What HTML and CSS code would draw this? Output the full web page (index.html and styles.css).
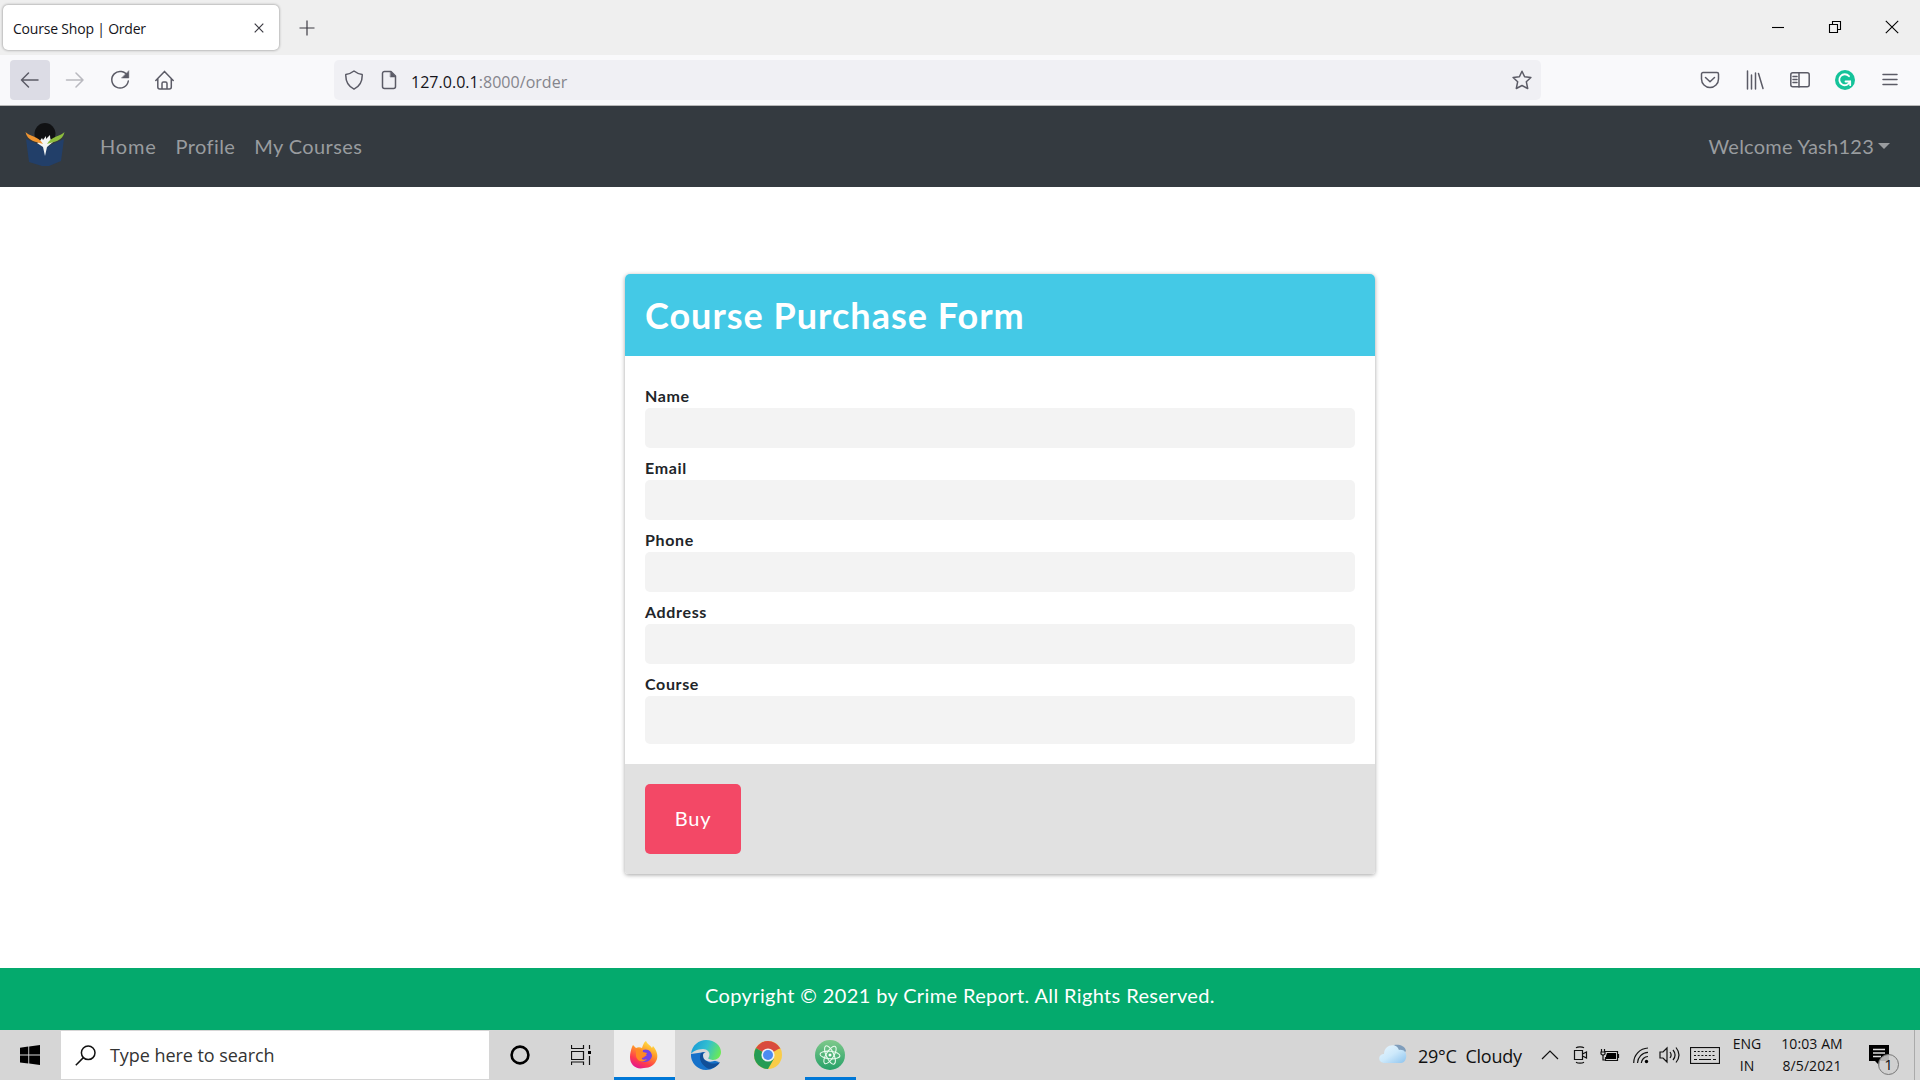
FILE: index.html
```html
<!DOCTYPE html>
<html lang="en">
<head>
<meta charset="utf-8">
<title>Course Shop | Order</title>
<link rel="stylesheet" href="styles.css">
</head>
<body>
<div class="tabs">
  <div class="tab"><span class="tab-title">Course Shop | Order</span>
    <svg class="tab-close" width="10" height="10" viewBox="0 0 10 10"><path d="M.7.7l8.6 8.6M9.300.7L.7 9.300"/></svg>
  </div>
  <svg class="new-tab" width="16" height="16" viewBox="0 0 16 16"><path d="M8 .5v15M.5 8h15"/></svg>
  <div class="window-controls">
    <svg width="14" height="14" viewBox="0 0 14 14"><path d="M1 7.500h12"/></svg>
    <svg width="14" height="14" viewBox="0 0 14 14"><path d="M1.500 4.500h8v8h-8zM4.500 4.500v-3h8v8h-3"/></svg>
    <svg width="14" height="14" viewBox="0 0 14 14"><path d="M.8.8l12.400 12.400M13.200.8L.8 13.200"/></svg>
  </div>
</div>
<div class="toolbar">
  <div class="tool active"><svg width="20" height="20" viewBox="0 0 20 20"><path d="M8.500 3l-7 7 7 7M1.500 10H18"/></svg></div>
  <div class="tool disabled"><svg width="20" height="20" viewBox="0 0 20 20"><path d="M11 3l7 7-7 7M18 10H1.500"/></svg></div>
  <div class="tool"><svg width="20" height="20" viewBox="0 0 20 20"><path d="M17.500 6A8.300 8.300 0 1 0 18.300 11"/><path class="solid" d="M18.800 1v7h-7z"/></svg></div>
  <div class="tool"><svg width="20" height="20" viewBox="0 0 20 20"><path d="M.8 10.500L9.500 1.400l8.700 9.100M2.800 8.500V17a2 2 0 0 0 2 2h9.500a2 2 0 0 0 2-2V8.500M7 19v-5.500a1.500 1.500 0 0 1 1.500-1.500h2a1.500 1.500 0 0 1 1.500 1.500V19"/></svg></div>
  <div class="address">
    <svg class="shield" width="20" height="20" viewBox="0 0 20 20"><path d="M10 1c2.500 2 5 3 8.200 3.500C18.500 11 15.500 16.500 10 19.200 4.500 16.500 1.500 11 1.800 4.500 5 4 7.500 3 10 1z"/></svg>
    <svg class="page-icon" width="16" height="20" viewBox="0 0 16 20"><path d="M10 1.500H3.500a2 2 0 0 0-2 2v13a2 2 0 0 0 2 2h9a2 2 0 0 0 2-2V6z"/><path class="solid" d="M9.500 1.500L14.500 7h-5z"/></svg>
    <span class="url">127.0.0.1<span class="url-path">:8000/order</span></span>
    <svg class="star" width="20" height="20" viewBox="0 0 20 20"><path d="M10 1.200l2.600 5.600 6.300.7-4.600 4.200 1.400 6.800-5.700-3-5.700 3 1.400-6.800L1.100 7.500l6.300-.7z"/></svg>
  </div>
  <div class="extensions">
    <svg width="20" height="20" viewBox="0 0 20 20"><path d="M3 2.500h14a1.500 1.500 0 0 1 1.500 1.500v5a8.500 8.500 0 0 1-17 0V4A1.500 1.500 0 0 1 3 2.500zM5.500 7.500L10 11.800l4.500-4.300"/></svg>
    <svg width="20" height="20" viewBox="0 0 20 20"><path d="M2.500 1v18M6.500 5v14M10.500 3v16M13.500 3.500l4.500 15"/></svg>
    <svg width="20" height="20" viewBox="0 0 20 20"><rect x=".8" y="2.800" width="18.400" height="14" rx="2"/><path d="M9 3v14M3 6.500h4M3 9.500h4M3 12.500h4"/></svg>
    <svg width="20" height="20" viewBox="0 0 20 20"><circle class="grammarly" cx="10" cy="10" r="10"/><path class="grammarly-g" d="M14 6.200a5.500 5.500 0 1 0 1 5.300h-4.500M15.200 11.200v4"/></svg>
    <svg width="20" height="20" viewBox="0 0 20 20"><path d="M3 4.500h14M3 9.500h14M3 14.500h14"/></svg>
  </div>
</div>
<nav class="navbar">
  <svg class="logo" width="40" height="44" viewBox="0 0 40 44">
    <path d="M1 16l18 8h2l18-8-3 22-12 5h-7L4 39z" fill="#223f69"/>
    <ellipse cx="20" cy="11" rx="10.500" ry="11" fill="#111214"/>
    <path d="M12 20c3-1 4-4 5-5l1 2 3-4v3l4-4c0 4 1 6 3 7l-6 5-2 9-2-9z" fill="#f5f6f5"/>
    <path d="M.5 9c3 4 13 4 17.500 12C12 19 2 18 .5 9z" fill="#ef9430"/>
    <path d="M39.500 9c-3 4-13 4-17.500 12 6-2 16-3 17.500-12z" fill="#8dbd3d"/>
  </svg>
  <a class="nav-home">Home</a><a class="nav-profile">Profile</a><a class="nav-courses">My Courses</a>
  <a class="welcome"><span class="welcome-text">Welcome Yash123</span><i class="caret"></i></a>
</nav>
<main class="page">
  <form class="card">
    <header class="card-head"><h1>Course Purchase Form</h1></header>
    <div class="card-body">
      <div class="field"><label>Name</label><input type="text"></div>
      <div class="field"><label>Email</label><input type="text"></div>
      <div class="field"><label>Phone</label><input type="text"></div>
      <div class="field"><label>Address</label><input type="text"></div>
      <div class="field"><label>Course</label><input class="tall" type="text"></div>
    </div>
    <footer class="card-foot"><button type="button">Buy</button></footer>
  </form>
</main>
<footer class="copyright"><span>Copyright © 2021 by Crime Report. All Rights Reserved.</span></footer>
<div class="taskbar">
  <div class="start"><svg width="20" height="20" viewBox="0 0 20 20"><path d="M0 2.800l8.300-1.200v8H0zM9.200 1.400L20 0v9.600H9.200zM0 10.500h8.300v8.100L0 17.400zM9.200 10.500H20V20L9.200 18.600z"/></svg></div>
  <div class="search"><svg width="21" height="21" viewBox="0 0 21 21"><circle cx="13.200" cy="7.800" r="6.800"/><path d="M8.400 12.600L.8 20.200"/></svg><span>Type here to search</span></div>
  <div class="apps">
    <div class="app"><svg width="20" height="20" viewBox="0 0 20 20"><circle class="cortana" cx="10" cy="10" r="8.400"/></svg></div>
    <div class="app"><svg class="task-view" width="20" height="20" viewBox="0 0 20 20"><path d="M.5 0v3.500h12V0M.5 6.500h12v8H.5zM.5 20v-3h12v3M18.500 0v4M18.500 11v9"/><path class="mark" d="M17 6h3v3h-3z"/></svg></div>
    <div class="app current"><svg width="30" height="30" viewBox="0 0 30 30">
      <defs><linearGradient id="fox" x1=".8" y1="0" x2=".3" y2="1"><stop offset="0" stop-color="#fff04a"/><stop offset=".4" stop-color="#ff9a28"/><stop offset=".75" stop-color="#ff3c4c"/><stop offset="1" stop-color="#e5178c"/></linearGradient></defs>
      <path fill="url(#fox)" d="M3 7l1-2 3 3c2-1 4-1 6 0 1-3 2-6 4-7 1 3 4 4 6 7l1-2c4 5 5 9 4 13-2 6-7 9-13 9C7 30 1 25 1 17c0-4 1-7 2-10z"/>
      <path fill="#7542e5" d="M14 10c5-2 9 2 9 6a7 7 0 0 1-7 6c-4 0-6-2-7-4l5 0 4-3-5-1z"/><path fill="#ff8a23" d="M7 9c3-1 5 0 7 3l4 1c-1 3-4 3-5 5s3 2 5 1c-3 4-10 3-11-3z"/>
    </svg></div>
    <div class="app"><svg width="30" height="30" viewBox="0 0 30 30">
      <defs><linearGradient id="edgeTop" x1="0" y1=".3" x2="1" y2=".6"><stop offset="0" stop-color="#199bd8"/><stop offset=".5" stop-color="#32bfd0"/><stop offset="1" stop-color="#6bea55"/></linearGradient></defs>
      <path fill="#1672ca" d="M0 14a15 15 0 0 0 15 16c6 0 10-3 13-8l-10-3-4-7z"/>
      <path d="M0 14C1 5 8 0 15 0c9 0 15 6 15 12 0 5-4 8-8 8-4 0-5-1-4-3 2-5-2-8-6-8C6 9 1 12 0 14z" fill="url(#edgeTop)"/>
      <path d="M10 13c-3 6 1 13 8 16 5-1 9-3 11-7-4 2-9 2-12 0-4-2-6-6-4-10z" fill="#114f98"/>
      <path d="M12 15c0-3 5-4 6-1 0 2-2 4 0 5 2 1 5 1 7 1-3 2-7 2-9 1-3-1-4-3-4-6z" fill="#d9dde0"/>
    </svg></div>
    <div class="app chrome"><svg width="28" height="28" viewBox="0 0 28 28">
      <circle cx="14" cy="14" r="14" fill="#f9cc48"/><path d="M14 14L1.900 7A14 14 0 0 1 26.100 7z" fill="#d94b3d"/><path d="M14 14L1.900 7A14 14 0 0 0 14 28l6-10.400z" fill="#259c54"/><path d="M14 7.500h12.400L26.100 7H14z" fill="#d94b3d"/>
      <circle cx="14" cy="14" r="6.600" fill="#eef1f5"/><circle cx="14" cy="14" r="5" fill="#4c8bf1"/>
    </svg></div>
    <div class="app running"><svg width="30" height="30" viewBox="0 0 30 30">
      <defs><linearGradient id="atom" x1="0" y1="0" x2="0" y2="1"><stop offset="0" stop-color="#7fc98b"/><stop offset="1" stop-color="#26a168"/></linearGradient></defs>
      <circle cx="15" cy="15" r="15" fill="url(#atom)"/><g class="orbits"><ellipse cx="15" cy="15" rx="10" ry="3.800" transform="rotate(5 15 15)"/><ellipse cx="15" cy="15" rx="10" ry="3.800" transform="rotate(65 15 15)"/><ellipse cx="15" cy="15" rx="10" ry="3.800" transform="rotate(122 15 15)"/></g><circle cx="15" cy="15" r="1.500" fill="#fff"/>
    </svg></div>
  </div>
  <div class="tray">
    <svg class="weather" width="28" height="20" viewBox="0 0 28 20"><defs><linearGradient id="cloud" x1="0" y1="0" x2="1" y2="1"><stop offset="0" stop-color="#e9f6fe"/><stop offset=".5" stop-color="#cde9fb"/><stop offset="1" stop-color="#8dc3ee"/></linearGradient></defs><path d="M15 1c4-1 11 0 12 6l-4 4z" fill="#7f9dbb"/><path d="M6 19c-8 0-7-9-1-9C5 1 17-2 20 6c6-1 8 4 7 8s-3 5-6 5z" fill="url(#cloud)"/></svg>
    <span class="weather-text">29°C&nbsp; Cloudy</span>
    <svg class="chevron" width="18" height="10" viewBox="0 0 18 10"><path d="M1 9l8-8 8 8"/></svg>
    <svg class="meet" width="15" height="18" viewBox="0 0 15 18"><path d="M1.500 4.500h8v9h-8zM9.500 8l4-2v6l-4-2M3 1.800c2-1.300 6-1.300 8 0M3 16.200c2 1.300 6 1.300 8 0"/></svg>
    <svg class="battery" width="20" height="14" viewBox="0 0 20 14"><path d="M5 3.500h12.500v9h-12V9M18.500 6v4M1.500 1v3M4.500 1v3M1 4h4v2L3 7.500 1 6zM3 7v5h2"/><path class="fill" d="M7 5h9v6H6V8z"/></svg>
    <svg class="wifi" width="16" height="17" viewBox="0 0 16 17"><path d="M.7 16A15 15 0 0 1 15 1M4.500 16A11 11 0 0 1 15 5.300M8.300 16A7 7 0 0 1 15 9.500"/><circle class="fill" cx="13.500" cy="14.500" r="1.700"/></svg>
    <svg class="volume" width="21" height="18" viewBox="0 0 21 18"><path d="M1 6h3l4-4v14l-4-4H1zM11 6c1.500 2 1.500 4 0 6M14 4c2.500 3 2.500 7 0 10M17 1.500c4 5 4 10 0 15"/></svg>
    <svg class="keyboard" width="30" height="17" viewBox="0 0 30 17"><rect x=".5" y=".5" width="29" height="16"/><path stroke-dasharray="2 1.700" d="M4 4.500h22M4 8.500h22"/><path d="M4 12.500h3M9 12.500h12M23 12.500h3"/></svg>
    <div class="language"><span>ENG</span><span>IN</span></div>
    <div class="clock"><span class="time">10:03 AM</span><span class="date">8/5/2021</span></div>
    <div class="notifications"><svg width="20" height="21" viewBox="0 0 20 21"><path class="fill" d="M0 0h20v16h-9l0 5-5-5H0z"/><path class="lines" d="M4 4.500h12M4 8h12M4 11.500h8"/></svg><b>1</b></div>
    <i class="show-desktop"></i>
  </div>
</div>
</body>
</html>
```
FILE: styles.css
```css
* { box-sizing: border-box; }
body { margin: 0; width: 1920px; height: 1080px; overflow: hidden; display: flex; flex-direction: column; background: #fff; font-family: Lato, sans-serif; }
svg { display: block; flex: none; fill: none; stroke: none; }
span { white-space: nowrap; }
.tabs, .toolbar, .taskbar { font-family: "Open Sans", sans-serif; }
.tabs { height: 55px; background: #efefef; display: flex; padding: 5px 3px; flex: none; }
.tab { width: 276px; height: 45px; border-radius: 5px; background: #fff; box-shadow: 0 0 3px rgba(0,0,0,.45); display: flex; align-items: center; justify-content: space-between; padding: 0 15px 0 10px; font-size: 14px; color: #15141a; }
.tab-title { padding-top: 2px; letter-spacing: -.2px; }
.tab-close, .new-tab { stroke: #3c3b43; stroke-width: 1.2; }
.new-tab { margin: 15px 0 0 20px; }
.window-controls { margin: 15px 18px 0 auto; display: flex; gap: 43px; }
.window-controls svg { stroke: #000; stroke-width: 1.1; }
.toolbar { height: 51px; flex: none; background: #f9f9fb; border-bottom: 1px solid #b8b8b8; display: flex; padding: 5px 0 0 10px; }
.toolbar svg { stroke: #5b5b66; stroke-width: 1.5; stroke-linecap: round; stroke-linejoin: round; }
.toolbar .solid { fill: #5b5b66; stroke-width: .5; }
.tool { width: 40px; height: 40px; margin-right: 5px; border-radius: 4px; display: grid; place-items: center; }
.active { background: #dcdce5; }
.disabled { opacity: .4; }
.address { margin-left: 144px; width: 1207px; height: 40px; border-radius: 5px; background: #f0f0f4; display: flex; align-items: center; padding: 0 9px 0 10px; }
.page-icon { margin-left: 17px; }
.url { margin: 4px auto 0 14px; font-size: 16px; letter-spacing: .03px; color: #15141a; }
.url-path { color: #85858c; }
.extensions { display: flex; gap: 25px; align-items: center; height: 40px; margin-left: 159px; }
.toolbar .grammarly { fill: #15c39a; stroke: none; }
.toolbar .grammarly-g { stroke: #fff; stroke-width: 1.8; }
.navbar { height: 81px; flex: none; background: #343a40; display: flex; align-items: center; padding: 0 30px 2px 25px; color: #999c9f; font-size: 20px; letter-spacing: .4px; }
.logo { margin: -1px 35px 0 0; }
.nav-home { letter-spacing: .8px; margin-right: 19px; }
.nav-profile { margin-right: 19px; }
.welcome { margin-left: auto; display: flex; align-items: center; gap: 4px; letter-spacing: .25px; }
.caret { border: 6px solid transparent; border-top-color: #999c9f; border-bottom: 0; }
.page { height: 781px; padding: 87px 0 0 625px; flex: none; }
.card { width: 750px; height: 600px; border-radius: 5px 5px 3px 3px; overflow: hidden; box-shadow: 0 1px 4px rgba(0,0,0,.36); display: flex; flex-direction: column; }
.card-head { height: 82px; background: #44c9e6; color: #fff; padding: 0 20px; display: flex; align-items: center; }
h1 { margin: 0; font-size: 36px; line-height: 44px; font-weight: 700; letter-spacing: 1px; }
.card-body { height: 408px; padding: 30px 20px 20px; display: flex; flex-direction: column; gap: 10px; }
.field { display: flex; flex-direction: column; }
.field label { height: 22px; line-height: 20px; font-size: 16px; letter-spacing: .65px; font-weight: 700; color: #212529; }
.field input { width: 100%; height: 40px; border: 0; border-radius: 5px; background: #f3f3f3; }
.field .tall { height: 48px; }
.card-foot { height: 110px; padding: 20px; background: #e1e1e1; }
button { width: 96px; height: 70px; border: 0; border-radius: 5px; background: #f34866; color: #fff; font: 20px Lato, sans-serif; letter-spacing: .7px; padding: 0 0 2px; }
.copyright { height: 62px; flex: none; background: #04aa6d; color: #fff; text-align: center; font-size: 20px; line-height: 54px; letter-spacing: .37px; }
.taskbar { height: 50px; flex: none; display: flex; background: #d6d6d6; color: #111; }
.start { width: 61px; padding-right: 1px; display: grid; place-items: center; }
.start svg { fill: #000; }
.search { width: 428px; height: 48px; margin-top: 1px; background: #fff; display: flex; align-items: center; gap: 14px; padding-left: 14px; font-size: 18px; letter-spacing: -.06px; color: #333; }
.search svg { stroke: #111; stroke-width: 1.5; }
.apps { display: flex; }
.app { width: 61px; height: 50px; display: grid; place-items: center; }
.cortana { stroke: #000; stroke-width: 2.6; }
.task-view { stroke: #111; stroke-width: 1.2; }
.mark { fill: #000; stroke: none; }
.current { margin-left: 3px; padding-right: 2px; background: #eee; box-shadow: inset 0 -3px #0078d7; }
.chrome { margin-left: 1px; }
.running { width: 51px; margin-left: 7px; padding-right: 2px; box-shadow: inset 0 -3px #0078d7; }
.orbits { stroke: #eafbee; stroke-width: 1.1; }
.tray { flex: 1; display: flex; align-items: center; }
.weather { margin-left: 523px; margin-top: -2px; }
.weather-text { width: 114px; font-size: 18px; letter-spacing: -.25px; margin: 1px 0 0 11px; }
.chevron, .meet, .battery, .wifi, .volume, .keyboard { stroke: #111; stroke-width: 1.2; }
.chevron { margin-left: 9px; }
.meet { margin-left: 14px; }
.battery { margin-left: 12px; }
.wifi { margin-left: 13px; }
.volume { margin-left: 10px; }
.keyboard { margin-left: 10px; }
.fill { fill: #000; stroke: none; }
.lines { stroke: #ddd; stroke-width: 1.5; }
.language, .clock { display: flex; flex-direction: column; align-items: center; font-size: 14px; line-height: 22px; }
.language { width: 34px; margin-left: 10px; }
.clock { width: 70px; margin-left: 13px; letter-spacing: .1px; }
.notifications { position: relative; width: 30px; height: 30px; margin: 9px 0 0 22px; }
.notifications b { position: absolute; left: 9px; top: 9px; width: 21px; height: 21px; border: 1px solid #777; border-radius: 50%; background: #cfcfcfdd; font-size: 15px; line-height: 19px; text-align: center; font-weight: 400; }
.show-desktop { width: 6px; height: 50px; margin-left: auto; border-left: 1px solid #aaa; }
```
